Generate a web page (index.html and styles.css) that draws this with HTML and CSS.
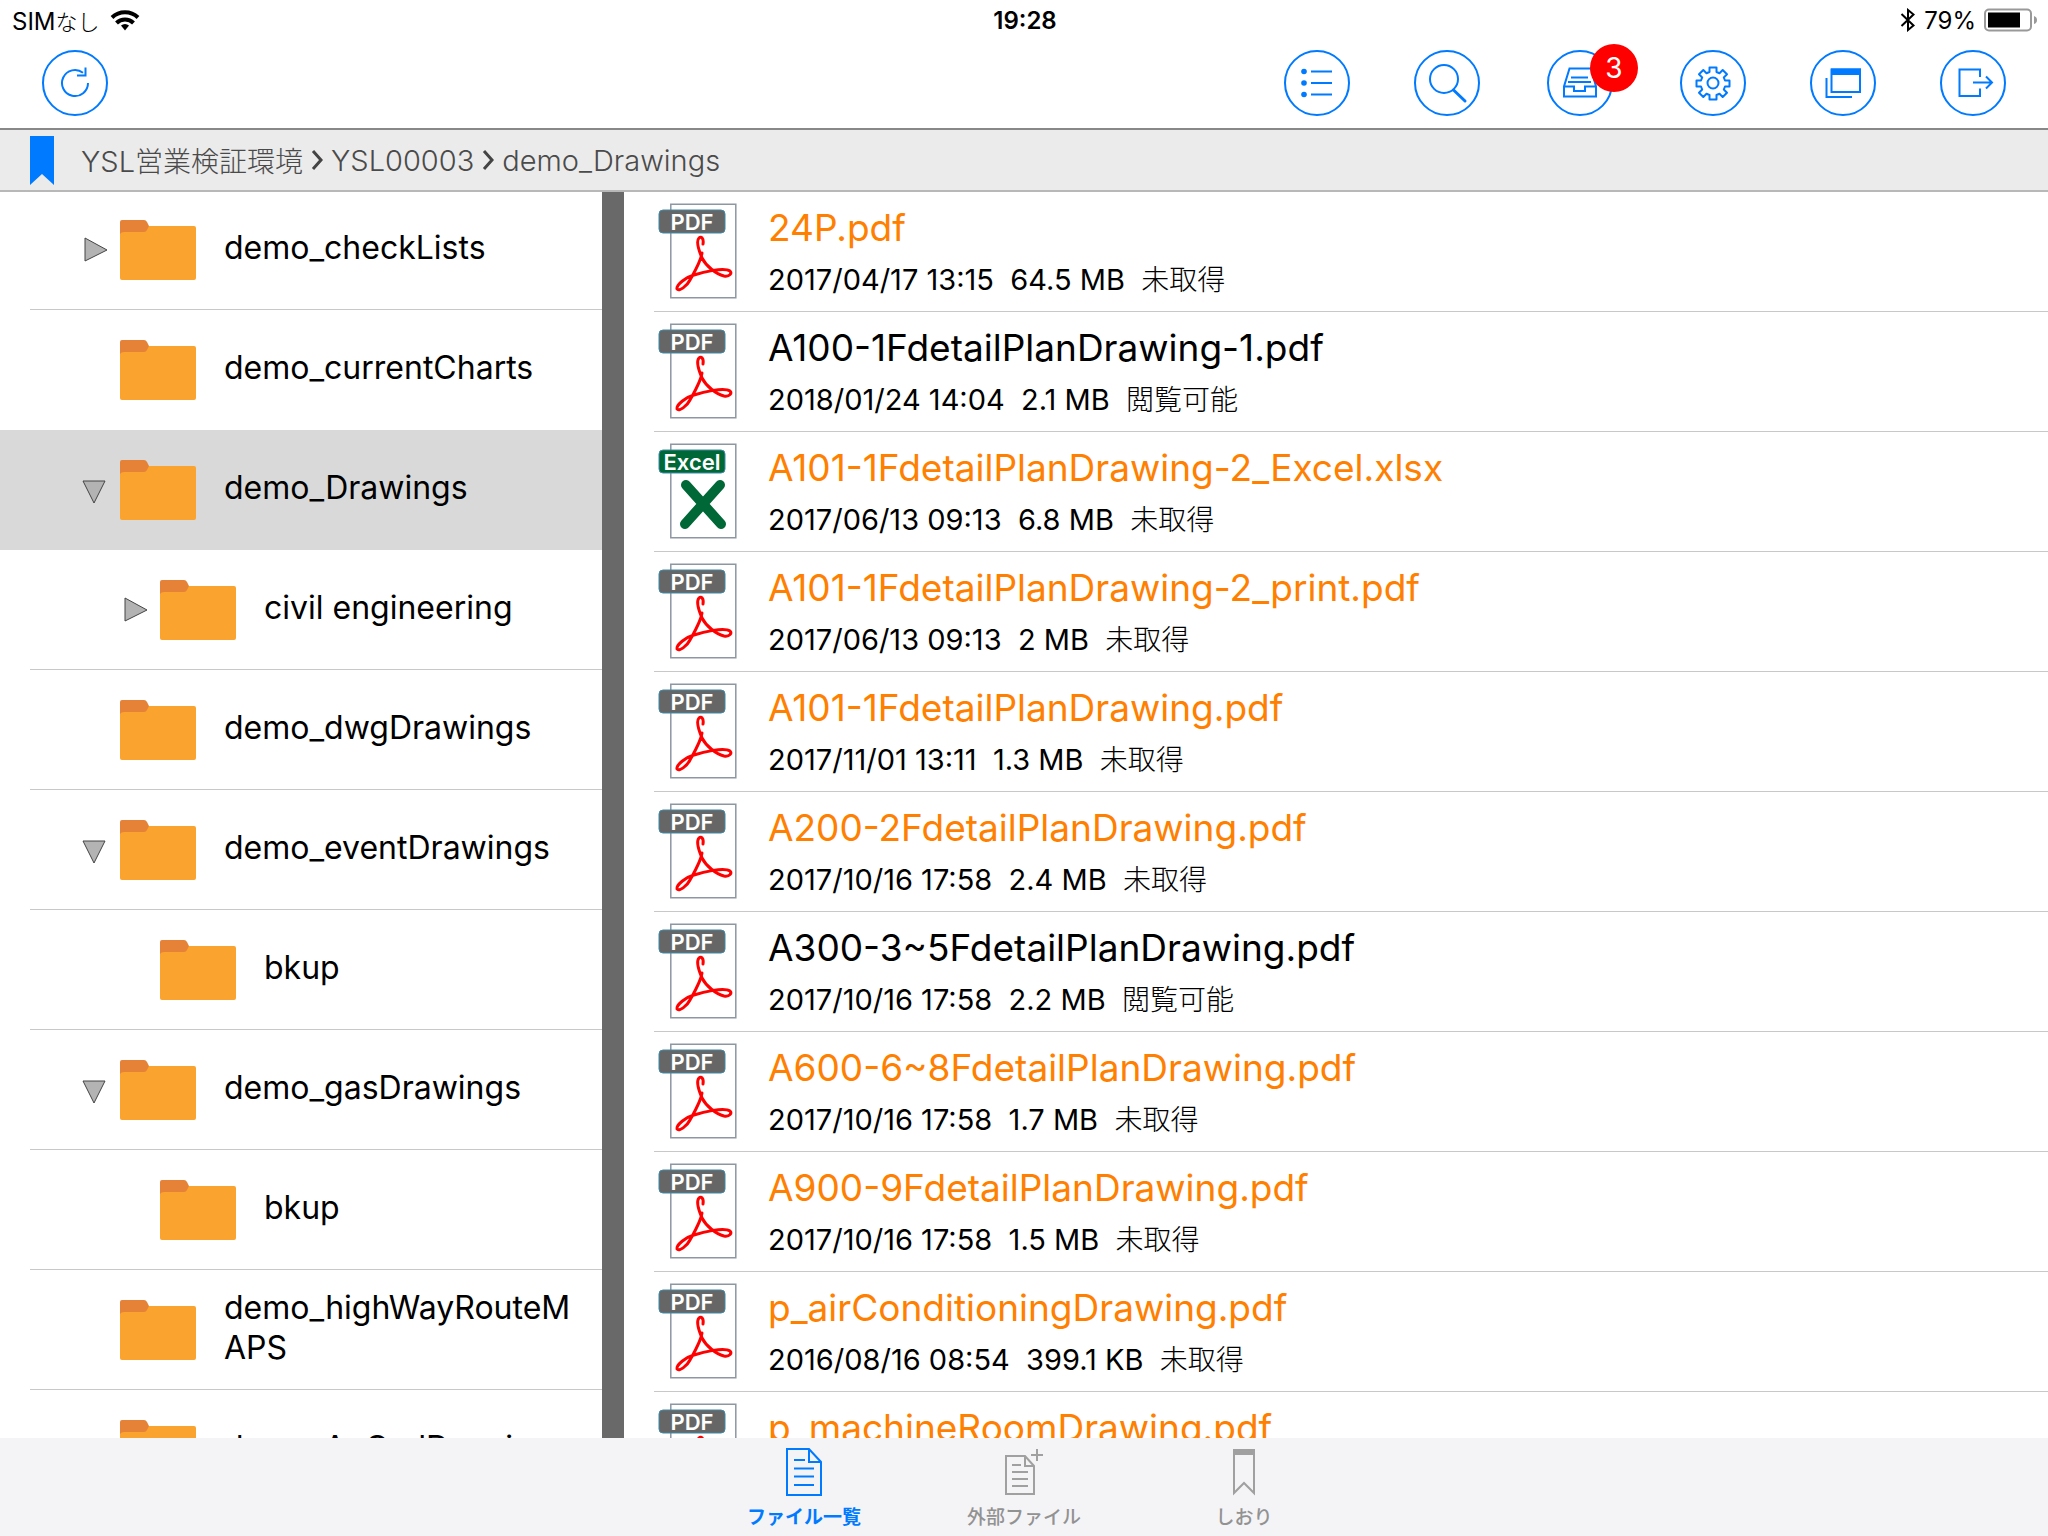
FILE: index.html
```html
<!DOCTYPE html>
<html lang="ja">

<head>
    <meta charset="UTF-8">
    <meta name="viewport" content="width=device-width, initial-scale=1.0">
    <title>demo_Drawings</title>
    <link rel="stylesheet" href="styles.css">
</head>

<body>
    <svg class="defs" aria-hidden="true">
        <symbol id="icon-folder" viewBox="0 0 76 60">
            <path fill="#fba32f" d="M2 6h72a2 2 0 0 1 2 2v50a2 2 0 0 1-2 2H2a2 2 0 0 1-2-2V8z" />
            <path fill="#e58237" d="M2 0h22q2 0 3 2l2 4-2 4q-1 2-3 2H4q-3 0-4 2V2a2 2 0 0 1 2-2z" />
        </symbol>
        <symbol id="icon-pdf" viewBox="0 0 80 96">
            <path fill="#fff" stroke="#8c97a1" stroke-width="1.5" d="M12.8 1.2h65v93.6h-65z" />
            <rect x="1" y="7" width="66" height="23" rx="4" fill="#666" stroke="#3e8aa8" />
            <path fill="none" stroke="red" stroke-width="3" stroke-linecap="round" d="M45 41C46 35 43 33 41 35C37 39 42 50 44 55C48 63 58 71 66 73C72 74 74 70 72 68C66 64 45 69 36 72C28 74 18 82 19 86C21 89 29 83 32 77C37 68 43 58 44 50" />
        </symbol>
        <symbol id="icon-excel" viewBox="0 0 80 96">
            <path fill="#fff" stroke="#8c97a1" stroke-width="1.5" d="M12.8 1.2h65v93.6h-65z" />
            <rect x="1" y="7" width="66" height="23" rx="4" fill="#006837" stroke="#3e8aa8" />
            <path stroke="#006837" stroke-width="10" stroke-linecap="round" d="M28 42l35 39M62 42L27 81" />
        </symbol>
    </svg>

    <div class="status">
        <div class="status-side">
            <span>SIM<span class="kana">なし</span></span>
            <svg width="30" height="21" viewBox="0 0 30 21">
                <path d="M15 20.500l-4-5a6 6 0 0 1 8 0z" />
                <path fill="none" stroke="#000" stroke-width="4" d="M2 7.500a19 19 0 0 1 26 0M6.500 13a12 12 0 0 1 17 0" />
            </svg>
        </div>
        <strong class="clock">19:28</strong>
        <div class="status-side status-right">
            <svg width="16" height="24" viewBox="0 0 16 24" fill="none" stroke="#000" stroke-width="2">
                <path d="M1.500 6l12 11.500L8 22V2l5.500 4.500L1.500 18" />
            </svg>
            <span>79%</span>
            <svg width="54" height="24" viewBox="0 0 54 24">
                <rect x="1" y="1.500" width="46" height="21" rx="4" fill="none" stroke="#999" stroke-width="2" />
                <path d="M4 4.500h32v15H4z" />
                <path fill="#999" d="M50 8q3 1 3 4t-3 4z" />
            </svg>
        </div>
    </div>

    <header class="toolbar">
        <button class="tool" aria-label="更新">
            <svg viewBox="0 0 66 66"><path d="M46 33a13 13 0 1 1-5-10.200M43.500 17.500v8H35" /></svg>
        </button>
        <div class="tools">
            <button class="tool" aria-label="一覧">
                <svg viewBox="0 0 66 66">
                    <path d="M27 21.500h21M27 33h21M27 44.500h21" />
                    <g fill="#007aff" stroke="none"><circle cx="20" cy="21.500" r="2.800" /><circle cx="20" cy="33" r="2.800" /><circle cx="20" cy="44.500" r="2.800" /></g>
                </svg>
            </button>
            <button class="tool" aria-label="検索">
                <svg viewBox="0 0 66 66"><circle cx="30" cy="29" r="14" /><path stroke-width="3" stroke-linecap="round" d="M39.500 40L51 51" /></svg>
            </button>
            <button class="tool inbox" aria-label="受信トレイ">
                <svg viewBox="0 0 66 66"><path d="M45 18.500H22.500L17 36.500v10h32v-10L44 18.500M17 36.500h10v4.500h11v-4.500h11M24 27.500h17M21 32h23" /></svg>
                <span class="badge">3</span>
            </button>
            <button class="tool" aria-label="設定">
                <svg viewBox="0 0 66 66">
                    <circle cx="33" cy="33" r="5.500" />
                    <path stroke-linejoin="round" d="M29.500 17.500h7v4.500l3 1.200 3.200-3.200 4.300 4.300-3.200 3.200 1.200 3h4.500v6h-4.500l-1.200 3 3.200 3.200-4.300 4.300-3.200-3.200-3 1.200v4.500h-7V45l-3-1.200-3.200 3.200-4.300-4.300 3.200-3.200-1.200-3h-4.500v-6H21l1.200-3-3.200-3.200 4.300-4.300 3.200 3.200 3-1.200z" />
                </svg>
            </button>
            <button class="tool" aria-label="ウィンドウ">
                <svg viewBox="0 0 66 66"><path d="M21.500 19.500h28.500V42H21.500zM16.500 28v19H42" /><path fill="#007aff" stroke="none" d="M21 18.500h30V25H21z" /></svg>
            </button>
            <button class="tool" aria-label="ログアウト">
                <svg viewBox="0 0 66 66"><path d="M40 27v-7.500H19.500V46H40v-7.500M33 32.500h19M46 26.500l6 6-6 6" /></svg>
            </button>
        </div>
    </header>

    <nav class="crumbs">
        <svg width="24" height="49" viewBox="0 0 24 49"><path fill="#007aff" d="M0 0h24v49L12 38 0 49z" /></svg>
        <a href="#">YSL<span class="kanji">営業検証環境</span></a>
        <svg class="chevron" viewBox="0 0 12 20"><path d="M2 1l8 9-8 9" /></svg>
        <a href="#">YSL00003</a>
        <svg class="chevron" viewBox="0 0 12 20"><path d="M2 1l8 9-8 9" /></svg>
        <a href="#">demo_Drawings</a>
    </nav>

    <main class="panes">
        <ul class="tree" id="tree"></ul>
        <ul class="files" id="files"></ul>
    </main>

    <footer class="tabs">
        <button class="tab active">
            <svg width="36" height="48" viewBox="0 0 36 48"><path d="M1 1h22l12 13v33H1zM23 1v13h12M8 12h11M8 20.500h20M8 28.500h20M8 37h20" /></svg>
            ファイル一覧
        </button>
        <button class="tab">
            <svg width="38" height="48" viewBox="0 0 38 48"><path d="M1 8h19l9 10v28H1zM20 8v10h9M7 17h9M7 24h16M7 31h16M7 38h16M32 1v12M26 7h12" /></svg>
            外部ファイル
        </button>
        <button class="tab">
            <svg width="22" height="48" viewBox="0 0 22 48"><path d="M1 3v42l10-10 10 10V3z" /><path fill="#a0a0a0" d="M1 2h20v4H1z" /></svg>
            しおり
        </button>
    </footer>

    <script src="script.js"></script>
</body>

</html>
```

FILE: styles.css
```css
* {
    box-sizing: border-box;
}

body {
    display: flex;
    flex-direction: column;
    height: 100vh;
    margin: 0;
    overflow: hidden;
    background-color: #fff;
    color: #000;
    font-family: Inter, "Noto Sans CJK JP", sans-serif;
}

button {
    border: 0;
    padding: 0;
    background: none;
    font-family: inherit;
}

ul {
    margin: 0;
    padding: 0;
    list-style: none;
}

.defs {
    display: none;
}

.status {
    display: flex;
    align-items: center;
    height: 40px;
    padding: 0 10px 0 12px;
    font-size: 24px;
}

.status-side {
    display: flex;
    flex: 1;
    align-items: center;
    gap: 10px;
}

.status-right {
    justify-content: flex-end;
    gap: 8px;
}

.kana {
    font-size: 22px;
    font-weight: 300;
}

.clock {
    font-weight: 600;
}

.toolbar {
    display: flex;
    justify-content: space-between;
    height: 88px;
    padding: 10px 42px;
}

.tools {
    display: flex;
    gap: 64px;
}

.tool {
    position: relative;
    width: 66px;
    height: 66px;
    border: 2px solid #007aff;
    border-radius: 50%;
}

.tool svg {
    display: block;
    width: 66px;
    height: 66px;
    margin: -2px;
    fill: none;
    stroke: #007aff;
    stroke-width: 2;
}

.inbox {
    margin: 0 3px;
}

.badge {
    position: absolute;
    top: -8px;
    right: -27px;
    width: 48px;
    border-radius: 24px;
    background-color: #f00;
    color: #fff;
    font-size: 28px;
    line-height: 48px;
    text-align: center;
}

.crumbs {
    display: flex;
    align-items: center;
    gap: 8px;
    height: 64px;
    padding: 0 30px;
    border-top: 2px solid #888;
    border-bottom: 2px solid #b8b8b8;
    background-color: #ebebeb;
    font-size: 29px;
    font-weight: 300;
}

.crumbs a {
    color: #4a4a4a;
    text-decoration: none;
}

.crumbs a:first-of-type {
    margin-left: 19px;
}

.kanji {
    font-size: 28px;
}

.chevron {
    width: 12px;
    height: 20px;
    fill: none;
    stroke: #444;
    stroke-width: 3;
}

.panes {
    display: flex;
    flex: 1;
    min-height: 0;
    overflow: hidden;
}

.tree {
    flex: none;
    width: 624px;
    margin-top: -2px;
    border-right: 22px solid #696969;
}

.node {
    display: flex;
    align-items: center;
    height: 120px;
    margin-left: 30px;
    padding-left: 52px;
    border-bottom: 1px solid #c8c8c8;
    font-size: 32px;
    line-height: 40px;
}

.node.child {
    padding-left: 92px;
}

.node.selected,
.node.before-selected {
    border-color: transparent;
}

.node.selected {
    margin-left: 0;
    padding-left: 82px;
    background-color: #d9d9d9;
}

.arrow {
    width: 28px;
    height: 28px;
    margin-right: 10px;
    fill: #b3b3b3;
    stroke: #444;
}

.folder {
    flex: none;
    width: 76px;
    height: 60px;
    margin-right: 28px;
}

.name {
    flex: 1;
    padding: 0 28px 4px 0;
    word-break: break-all;
}

.files {
    flex: 1;
    padding-left: 30px;
}

.file {
    display: flex;
    gap: 30px;
    height: 120px;
    padding: 11px 4px;
    border-bottom: 1px solid #c8c8c8;
}

.doc {
    position: relative;
    width: 80px;
    height: 96px;
}

.doc svg {
    display: block;
    width: 80px;
    height: 96px;
}

.kind {
    position: absolute;
    top: 7px;
    left: 0;
    width: 68px;
    color: #fff;
    font-size: 22px;
    font-weight: 600;
    line-height: 25px;
    text-align: center;
}

.title {
    color: #ff8000;
    font-size: 37px;
    line-height: 50px;
}

.title.ready {
    color: #000;
}

.meta {
    font-size: 29px;
    line-height: 54px;
    white-space: pre;
}

.state {
    font-size: 28px;
    font-weight: 300;
}

.tabs {
    display: flex;
    justify-content: center;
    height: 98px;
    background-color: #f4f4f7;
}

.tab {
    display: flex;
    flex-direction: column;
    align-items: center;
    gap: 8px;
    width: 220px;
    padding-top: 10px;
    color: #929292;
    font-size: 19px;
    font-weight: 500;
    line-height: 28px;
}

.tab svg {
    fill: none;
    stroke: #a0a0a0;
    stroke-width: 2;
}

.tab.active {
    color: #007aff;
    font-weight: 700;
}

.tab.active svg {
    stroke: #007aff;
}
```

FILE: script.js
```js
const nodes = [
    ["demo_checkLists", "closed"],
    ["demo_currentCharts", "", "before-selected"],
    ["demo_Drawings", "open", "selected"],
    ["civil engineering", "closed", "child"],
    ["demo_dwgDrawings", ""],
    ["demo_eventDrawings", "open"],
    ["bkup", "", "child"],
    ["demo_gasDrawings", "open"],
    ["bkup", "", "child"],
    ["demo_highWayRouteMAPS", ""],
    ["demo_AuCadDrawings", ""]
];

const files = [
    ["24P.pdf", "2017/04/17 13:15", "64.5 MB", "未取得"],
    ["A100-1FdetailPlanDrawing-1.pdf", "2018/01/24 14:04", "2.1 MB", "閲覧可能"],
    ["A101-1FdetailPlanDrawing-2_Excel.xlsx", "2017/06/13 09:13", "6.8 MB", "未取得"],
    ["A101-1FdetailPlanDrawing-2_print.pdf", "2017/06/13 09:13", "2 MB", "未取得"],
    ["A101-1FdetailPlanDrawing.pdf", "2017/11/01 13:11", "1.3 MB", "未取得"],
    ["A200-2FdetailPlanDrawing.pdf", "2017/10/16 17:58", "2.4 MB", "未取得"],
    ["A300-3~5FdetailPlanDrawing.pdf", "2017/10/16 17:58", "2.2 MB", "閲覧可能"],
    ["A600-6~8FdetailPlanDrawing.pdf", "2017/10/16 17:58", "1.7 MB", "未取得"],
    ["A900-9FdetailPlanDrawing.pdf", "2017/10/16 17:58", "1.5 MB", "未取得"],
    ["p_airConditioningDrawing.pdf", "2016/08/16 08:54", "399.1 KB", "未取得"],
    ["p_machineRoomDrawing.pdf", "", "", ""]
];

const arrows = {
    closed: '<path d="M3 2l22 12L3 25z" />',
    open: '<path d="M1 5h22L12 27z" />',
    "": ""
};

document.querySelector("#tree").innerHTML = nodes.map(([name, state, cls = ""]) => `
    <li class="node ${cls}">
        <svg class="arrow" viewBox="0 0 28 28">${arrows[state]}</svg>
        <svg class="folder"><use href="#icon-folder" /></svg>
        <span class="name">${name}</span>
    </li>`).join("");

document.querySelector("#files").innerHTML = files.map(([name, date, size, state]) => {
    const kind = name.endsWith(".xlsx") ? "Excel" : "PDF";
    return `
    <li class="file">
        <div class="doc">
            <svg><use href="#icon-${kind.toLowerCase()}" /></svg>
            <span class="kind">${kind}</span>
        </div>
        <div>
            <div class="title ${state === "閲覧可能" ? "ready" : ""}">${name}</div>
            <div class="meta">${date}  ${size}  <span class="state">${state}</span></div>
        </div>
    </li>`;
}).join("");
```
